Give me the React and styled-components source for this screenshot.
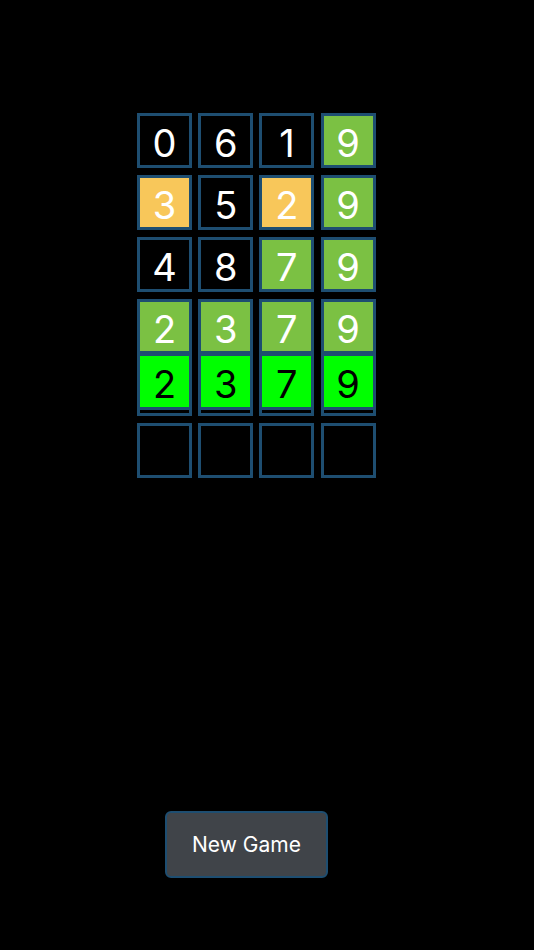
import React from 'react'
import styled, { createGlobalStyle } from 'styled-components'

const GlobalStyle = createGlobalStyle`
  html, body {
    margin: 0;
    padding: 0;
    background: #000;
  }
  body {
    font-family: Inter, "Liberation Sans", Arial, sans-serif;
  }
`

const EDGE = '#1e4e71'

const fills = {
  absent: '#000',
  present: '#f8c75a',
  correct: '#7bc143',
  guess: '#00ff00',
}

const Page = styled.div`
  min-height: 950px;
  display: flex;
  flex-direction: column;
  align-items: flex-start;
  padding-top: 113px;
  box-sizing: border-box;
`

const Board = styled.div`
  margin-left: 137px;
  display: grid;
  grid-template-columns: repeat(4, 55px);
  grid-auto-rows: 55px;
  column-gap: 6.2px;
  row-gap: 7px;
`

const Cell = styled.div`
  position: relative;
  box-sizing: border-box;
  border: 3px solid ${EDGE};
  background: ${(p) => fills[p.$state] || '#000'};
  color: #fff;
  font-size: 38px;
  display: flex;
  align-items: center;
  justify-content: center;
  padding-top: 4px;
`

const Tile = styled.div`
  position: absolute;
  top: -11px;
  left: -3px;
  width: 55px;
  height: 57px;
  box-sizing: border-box;
  border: 3px solid ${EDGE};
  background: ${fills.guess};
  color: #000;
  font-size: 38px;
  display: flex;
  align-items: center;
  justify-content: center;
  padding-top: 4px;
`

const NewGame = styled.button`
  margin-top: 333px;
  margin-left: 165px;
  width: 163px;
  height: 67px;
  box-sizing: border-box;
  border: 2px solid ${EDGE};
  border-radius: 6px;
  background: #404449;
  color: #fff;
  font-family: Inter, "Liberation Sans", Arial, sans-serif;
  font-size: 21px;
  cursor: pointer;
`

const rows = [
  [['0', 'absent'], ['6', 'absent'], ['1', 'absent'], ['9', 'correct']],
  [['3', 'present'], ['5', 'absent'], ['2', 'present'], ['9', 'correct']],
  [['4', 'absent'], ['8', 'absent'], ['7', 'correct'], ['9', 'correct']],
  [['2', 'correct'], ['3', 'correct'], ['7', 'correct'], ['9', 'correct']],
]

const guess = ['2', '3', '7', '9']

export default function App() {
  return (
    <>
      <GlobalStyle />
      <Page>
        <Board>
          {rows.map((row, r) =>
            row.map(([digit, state], c) => (
              <Cell key={`${r}-${c}`} $state={state}>
                {digit}
              </Cell>
            ))
          )}
          {guess.map((digit, c) => (
            <Cell key={`g-${c}`} $state="absent">
              <Tile>{digit}</Tile>
            </Cell>
          ))}
          {[0, 1, 2, 3].map((c) => (
            <Cell key={`e-${c}`} $state="absent" />
          ))}
        </Board>
        <NewGame>New Game</NewGame>
      </Page>
    </>
  )
}
